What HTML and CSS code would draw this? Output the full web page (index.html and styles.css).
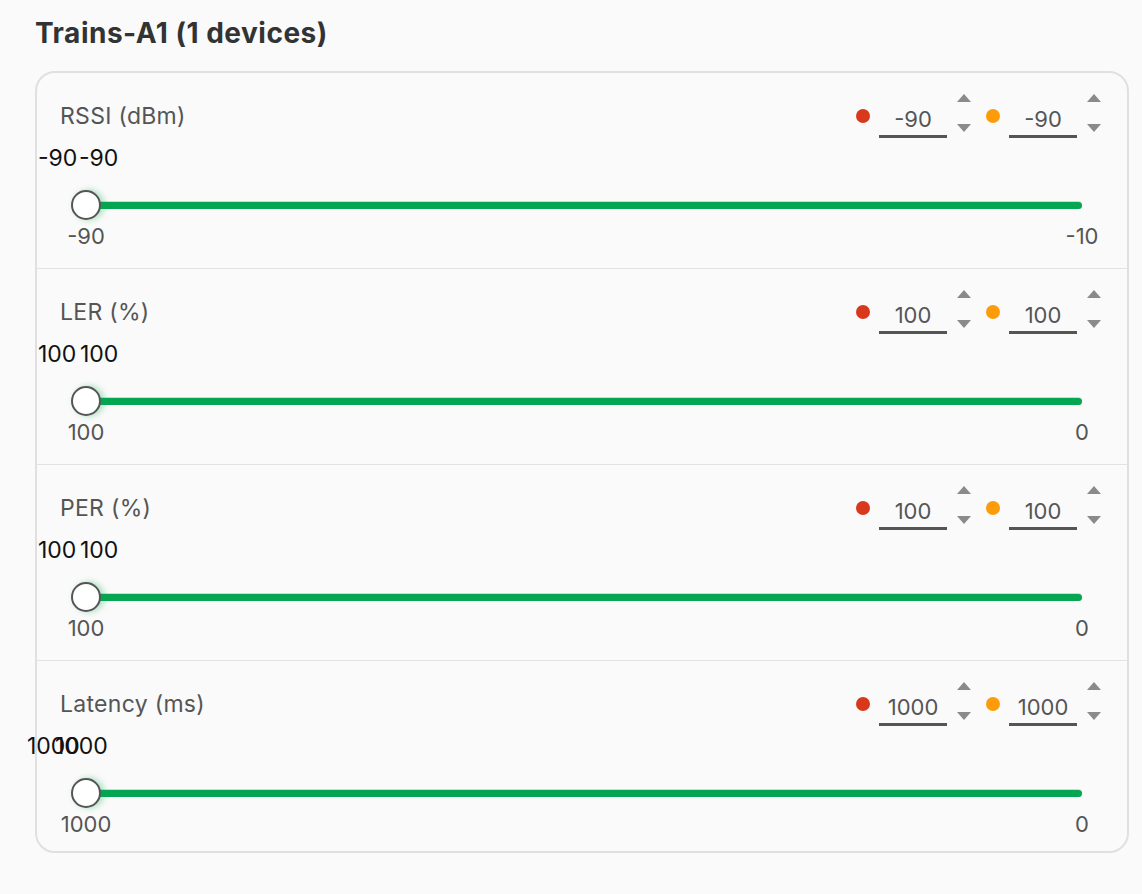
FILE: index.html
```html
<!DOCTYPE html>
<html>
<head>
	<meta charset="utf-8">
	<meta name="viewport" content="width=device-width, initial-scale=1">
	<title>Trains-A1</title>
	<link rel="stylesheet" href="styles.css">
</head>
<body>
	<div class="page">
		<h2 class="title">Trains-A1 (1 devices)</h2>
		<div class="card">

			<div class="metric">
				<div class="metric-head">
					<span class="metric-name">RSSI (dBm)</span>
					<div class="thresholds">
						<span class="dot dot-red"></span>
						<div class="num"><span>-90</span></div>
						<div class="spin"><span class="arrow arrow-up"></span><span class="arrow arrow-down"></span></div>
						<span class="dot dot-orange"></span>
						<div class="num"><span>-90</span></div>
						<div class="spin"><span class="arrow arrow-up"></span><span class="arrow arrow-down"></span></div>
					</div>
				</div>
				<div class="bubbles">
					<span class="bubble" style="left: -22px;">-90</span>
					<span class="bubble" style="left: 19px;">-90</span>
				</div>
				<div class="slider">
					<div class="rail"><div class="fill"></div></div>
					<span class="thumb"></span>
				</div>
				<div class="ticks">
					<span class="tick"><span>-90</span></span>
					<span class="tick"><span>-10</span></span>
				</div>
			</div>

			<div class="metric">
				<div class="metric-head">
					<span class="metric-name">LER (%)</span>
					<div class="thresholds">
						<span class="dot dot-red"></span>
						<div class="num"><span>100</span></div>
						<div class="spin"><span class="arrow arrow-up"></span><span class="arrow arrow-down"></span></div>
						<span class="dot dot-orange"></span>
						<div class="num"><span>100</span></div>
						<div class="spin"><span class="arrow arrow-up"></span><span class="arrow arrow-down"></span></div>
					</div>
				</div>
				<div class="bubbles">
					<span class="bubble" style="left: -22px;">100</span>
					<span class="bubble" style="left: 20px;">100</span>
				</div>
				<div class="slider">
					<div class="rail"><div class="fill"></div></div>
					<span class="thumb"></span>
				</div>
				<div class="ticks">
					<span class="tick"><span>100</span></span>
					<span class="tick"><span>0</span></span>
				</div>
			</div>

			<div class="metric">
				<div class="metric-head">
					<span class="metric-name">PER (%)</span>
					<div class="thresholds">
						<span class="dot dot-red"></span>
						<div class="num"><span>100</span></div>
						<div class="spin"><span class="arrow arrow-up"></span><span class="arrow arrow-down"></span></div>
						<span class="dot dot-orange"></span>
						<div class="num"><span>100</span></div>
						<div class="spin"><span class="arrow arrow-up"></span><span class="arrow arrow-down"></span></div>
					</div>
				</div>
				<div class="bubbles">
					<span class="bubble" style="left: -22px;">100</span>
					<span class="bubble" style="left: 20px;">100</span>
				</div>
				<div class="slider">
					<div class="rail"><div class="fill"></div></div>
					<span class="thumb"></span>
				</div>
				<div class="ticks">
					<span class="tick"><span>100</span></span>
					<span class="tick"><span>0</span></span>
				</div>
			</div>

			<div class="metric">
				<div class="metric-head">
					<span class="metric-name">Latency (ms)</span>
					<div class="thresholds">
						<span class="dot dot-red"></span>
						<div class="num"><span>1000</span></div>
						<div class="spin"><span class="arrow arrow-up"></span><span class="arrow arrow-down"></span></div>
						<span class="dot dot-orange"></span>
						<div class="num"><span>1000</span></div>
						<div class="spin"><span class="arrow arrow-up"></span><span class="arrow arrow-down"></span></div>
					</div>
				</div>
				<div class="bubbles">
					<span class="bubble" style="left: -33px;">1000</span>
					<span class="bubble" style="left: -5px;">1000</span>
				</div>
				<div class="slider">
					<div class="rail"><div class="fill"></div></div>
					<span class="thumb"></span>
				</div>
				<div class="ticks">
					<span class="tick"><span>1000</span></span>
					<span class="tick"><span>0</span></span>
				</div>
			</div>

		</div>
	</div>
</body>
</html>
```

FILE: styles.css
```css
html, body {
	margin: 0;
	background-color: #fafafa;
}

.page {
	padding: 17px 13px 0 35px;
	font-family: Inter, "Liberation Sans", sans-serif;
	color: #555;
}

.page * {
	box-sizing: border-box;
}

.title {
	margin: 0 0 22px;
	font-size: 28px;
	line-height: 32px;
	font-weight: 700;
	letter-spacing: 0.5px;
	color: #333;
}

.card {
	border: 2px solid #e0e0e0;
	border-radius: 20px;
}

.metric {
	padding: 21px 26px 20px 23px;
	border-bottom: 1px solid #e2e2e2;
}

.metric:last-child {
	border-bottom: none;
	padding-bottom: 15px;
}

.metric-head {
	display: flex;
	justify-content: space-between;
	height: 44px;
}

.metric-name {
	align-self: center;
	font-size: 23px;
	line-height: 24px;
	letter-spacing: 0.3px;
}

.thresholds {
	display: flex;
}

.dot {
	align-self: center;
	width: 14px;
	height: 14px;
	border-radius: 50%;
	margin-right: 9px;
}

.dot-red {
	background-color: #d8391d;
}

.dot-orange {
	background-color: #fd9c0b;
	margin-left: 15px;
}

.num {
	display: flex;
	align-items: flex-end;
	justify-content: center;
	width: 68px;
	height: 44px;
	padding-bottom: 4px;
	border-bottom: 3px solid #555;
	font-size: 22px;
	line-height: 24px;
}

.spin {
	display: flex;
	flex-direction: column;
	justify-content: space-between;
	height: 38px;
	margin-left: 10px;
}

.arrow {
	display: block;
	width: 0;
	height: 0;
	border-left: 7px solid transparent;
	border-right: 7px solid transparent;
}

.arrow-up {
	border-bottom: 8px solid #8a8a8a;
}

.arrow-down {
	border-top: 8px solid #8a8a8a;
}

.bubbles {
	position: relative;
	height: 24px;
	margin-top: 8px;
}

.bubble {
	position: absolute;
	top: 0;
	font-size: 23px;
	line-height: 24px;
	color: #111;
	white-space: nowrap;
}

.slider {
	position: relative;
	height: 32px;
	margin: 19px 3px 0 10px;
	display: flex;
	align-items: center;
	padding: 0 16px;
}

.rail {
	flex: 1;
	height: 8px;
	border-radius: 4px;
	background-color: #d6d6d6;
	padding-top: 1px;
}

.fill {
	height: 7px;
	border-radius: 4px;
	background-color: #04a651;
}

.thumb {
	position: absolute;
	left: 1px;
	top: 1px;
	width: 30px;
	height: 30px;
	border-radius: 50%;
	background-color: #fff;
	border: 2px solid #555;
	box-shadow: 3px 0 6px rgba(4, 166, 81, 0.35);
}

.ticks {
	display: flex;
	justify-content: space-between;
	margin: 3px 19px 0 26px;
	height: 24px;
}

.tick {
	display: flex;
	justify-content: center;
	width: 0;
	font-size: 22px;
	line-height: 24px;
	white-space: nowrap;
}
```
